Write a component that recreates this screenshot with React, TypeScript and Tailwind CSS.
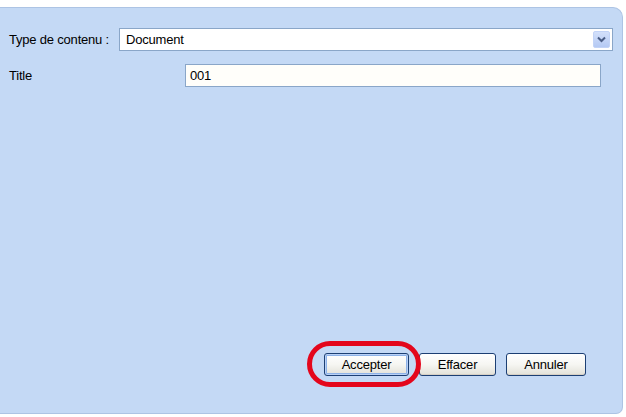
import React from "react";

const font = { fontFamily: '"Liberation Sans", Arial, sans-serif' };

function XpButton({ label, w, focused }: { label: string; w: string; focused?: boolean }) {
  return (
    <div
      className={`${w} h-[23px] rounded-[3px] border border-[#1c3f73] bg-gradient-to-b from-[#ffffff] via-[#f6f6f2] to-[#e2e1d8] flex items-center justify-center text-[13px] text-black ${
        focused ? "shadow-[inset_0_0_0_1px_#b9d1f6,inset_0_0_0_2px_#8db2e8]" : "shadow-[inset_0_-1px_0_0_#d6d0c5]"
      }`}
    >
      <span className="tracking-[-0.2px]">{label}</span>
    </div>
  );
}

export default function App() {
  return (
    <div className="w-[626px] h-[417px] bg-white pt-[7px] pr-[3px] pb-[3px]" style={font}>
      <div className="h-full w-full bg-[#c4d9f5] rounded-tr-[10px] rounded-br-[7px] border-t border-r border-b border-[#adc4e4] flex flex-col">
        <div className="flex items-center pl-[9px] mt-[20px] h-[23px]">
          <div className="w-[110px] text-[13px] text-black tracking-[-0.2px]">Type de contenu :</div>
          <div className="w-[494px] h-[23px] bg-white border border-[#8aa6c8] flex items-center justify-between pl-[6px] pr-[2px]">
            <span className="text-[13px] text-black tracking-[-0.2px]">Document</span>
            <div className="w-[17px] h-[17px] rounded-[2px] bg-gradient-to-b from-[#d3e0fb] to-[#b4c9f3] border border-[#c2d3f7] flex items-center justify-center">
              <svg width="9" height="7" viewBox="0 0 9 7">
                <path d="M1 1.5 L4.5 5 L8 1.5" stroke="#4a5d85" strokeWidth="2" fill="none" />
              </svg>
            </div>
          </div>
        </div>
        <div className="flex items-center pl-[9px] mt-[13px] h-[23px]">
          <div className="w-[176px] text-[13px] text-black tracking-[-0.2px]">Title</div>
          <div className="w-[416px] h-[23px] bg-[#fffefa] border border-[#8aa6c8] flex items-center pl-[4px]">
            <span className="text-[13px] text-black tracking-[-0.2px]">001</span>
          </div>
        </div>
        <div className="flex-1" />
        <div className="flex justify-end gap-[10px] pr-[36px] mb-[37px]">
          <div className="relative">
            <XpButton label="Accepter" w="w-[85px]" focused />
            <div className="absolute left-[-17px] top-[-12px] w-[114px] h-[46px] rounded-[23px] border-[5px] border-[#e4061c]" />
          </div>
          <XpButton label="Effacer" w="w-[77px]" />
          <XpButton label="Annuler" w="w-[80px]" />
        </div>
      </div>
    </div>
  );
}
